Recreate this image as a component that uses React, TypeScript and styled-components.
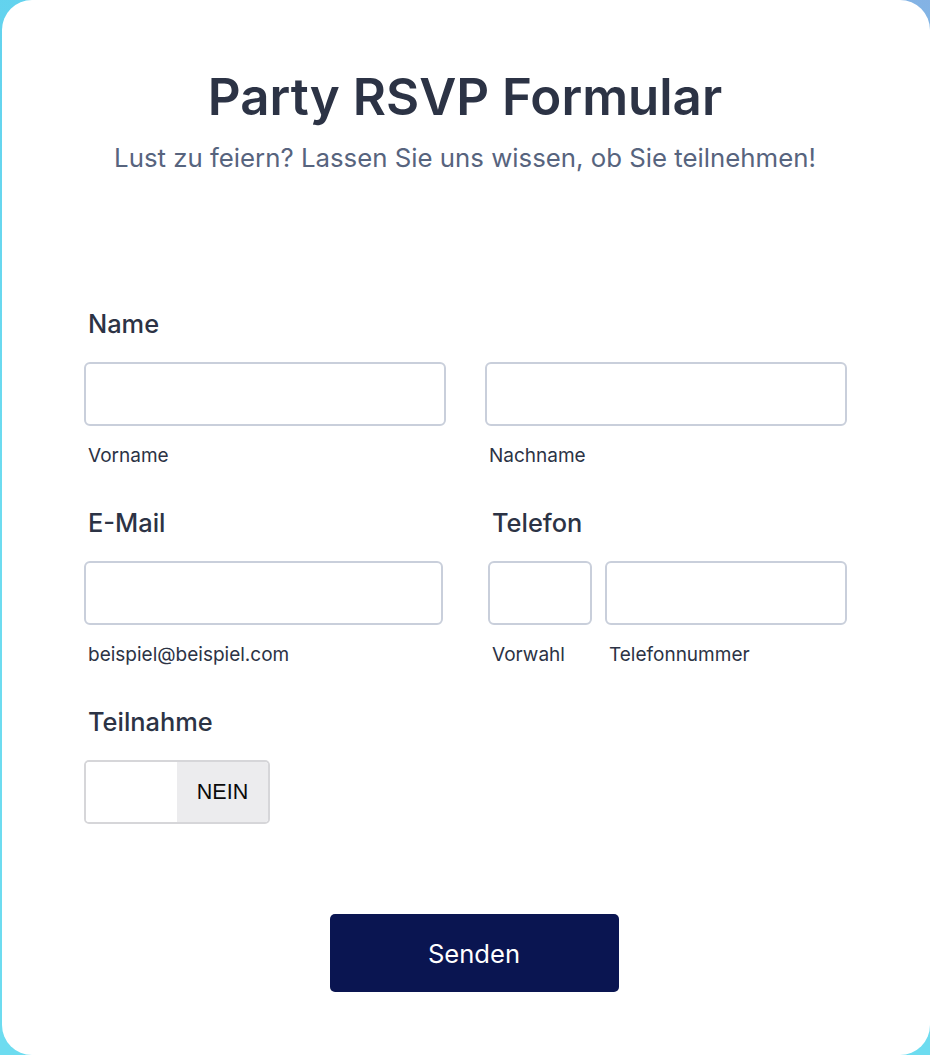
import styled, { createGlobalStyle } from 'styled-components'

const GlobalStyle = createGlobalStyle`
  html, body {
    margin: 0;
    padding: 0;
  }
  body {
    font-family: Inter, "Noto Sans", "Liberation Sans", sans-serif;
    background: linear-gradient(200deg, #84b2e4 0%, #62d2ee 22%, #6ddcf0 60%, #6ddcf0 100%);
    min-height: 1055px;
  }
  * { box-sizing: border-box; }
`

const Card = styled.div`
  width: 928px;
  height: 1055px;
  margin-left: 2px;
  background: #fff;
  border-radius: 30px;
  padding-top: 67px;
  overflow: hidden;
`

const Header = styled.header`
  text-align: center;
  padding-right: 2px;
`

const Title = styled.h1`
  margin: 0;
  font-size: 51px;
  line-height: 60px;
  font-weight: 600;
  color: #2c3345;
`

const Subtitle = styled.p`
  margin: 15px 0 0;
  font-size: 25.8px;
  line-height: 32px;
  color: #57647e;
`

const Form = styled.form`
  margin: 134px 0 0 82px;
  width: 763px;
  display: flex;
  flex-direction: column;
  gap: 39px;
`

type RowProps = { columns: string; gap: number }
const Row = styled.div<RowProps>`
  display: grid;
  grid-template-columns: ${p => p.columns};
  column-gap: ${p => p.gap}px;
`

const Field = styled.div`
  display: flex;
  flex-direction: column;
`

const Label = styled.label`
  padding-left: 4px;
  font-size: 25.4px;
  line-height: 32px;
  font-weight: 500;
  color: #2c3345;
`

const Inputs = styled.div<RowProps>`
  margin-top: 22px;
  display: grid;
  grid-template-columns: ${p => p.columns};
  column-gap: ${p => p.gap}px;
  align-items: start;
`

const InputCol = styled.div`
  display: flex;
  flex-direction: column;
`

const Input = styled.input`
  height: 64px;
  width: 100%;
  border: 2px solid #c9cfdb;
  border-radius: 6px;
  background: #fff;
  font: inherit;
  padding: 0 12px;
`

const SubLabel = styled.span`
  margin-top: 18px;
  padding-left: 4px;
  font-size: 19px;
  line-height: 24px;
  color: #2c3345;
`

const Toggle = styled.div`
  margin-top: 22px;
  width: 186px;
  height: 64px;
  border: 2px solid #d6d6d9;
  border-radius: 5px;
  display: grid;
  grid-template-columns: 1fr 1fr;
  overflow: hidden;
`

const ToggleHalf = styled.div<{ active?: boolean }>`
  background: ${p => (p.active ? '#ececee' : '#fff')};
  display: flex;
  align-items: center;
  justify-content: center;
  font-family: "Liberation Sans", Arial, sans-serif;
  font-size: 21.5px;
  color: #0a0a0a;
`

const Actions = styled.div`
  margin-top: 51px;
  display: flex;
  justify-content: center;
  padding-left: 17px;
`

const SubmitButton = styled.button`
  width: 289px;
  height: 78px;
  border: none;
  border-radius: 5px;
  background: #0a1551;
  color: #fff;
  font-family: inherit;
  font-size: 25.6px;
  cursor: pointer;
`

export default function App() {
  return (
    <>
      <GlobalStyle />
      <Card>
        <Header>
          <Title>Party RSVP Formular</Title>
          <Subtitle>Lust zu feiern? Lassen Sie uns wissen, ob Sie teilnehmen!</Subtitle>
        </Header>
        <Form onSubmit={e => e.preventDefault()}>
          <Field>
            <Label>Name</Label>
            <Inputs columns="362px 362px" gap={39}>
              <InputCol>
                <Input type="text" />
                <SubLabel>Vorname</SubLabel>
              </InputCol>
              <InputCol>
                <Input type="text" />
                <SubLabel>Nachname</SubLabel>
              </InputCol>
            </Inputs>
          </Field>

          <Row columns="359px 359px" gap={45}>
            <Field>
              <Label>E-Mail</Label>
              <Inputs columns="1fr" gap={0}>
                <InputCol>
                  <Input type="email" />
                  <SubLabel>beispiel@beispiel.com</SubLabel>
                </InputCol>
              </Inputs>
            </Field>
            <Field>
              <Label>Telefon</Label>
              <Inputs columns="104px 242px" gap={13}>
                <InputCol>
                  <Input type="tel" />
                  <SubLabel>Vorwahl</SubLabel>
                </InputCol>
                <InputCol>
                  <Input type="tel" />
                  <SubLabel>Telefonnummer</SubLabel>
                </InputCol>
              </Inputs>
            </Field>
          </Row>

          <Field>
            <Label>Teilnahme</Label>
            <Toggle>
              <ToggleHalf />
              <ToggleHalf active>NEIN</ToggleHalf>
            </Toggle>
          </Field>

          <Actions>
            <SubmitButton type="submit">Senden</SubmitButton>
          </Actions>
        </Form>
      </Card>
    </>
  )
}
